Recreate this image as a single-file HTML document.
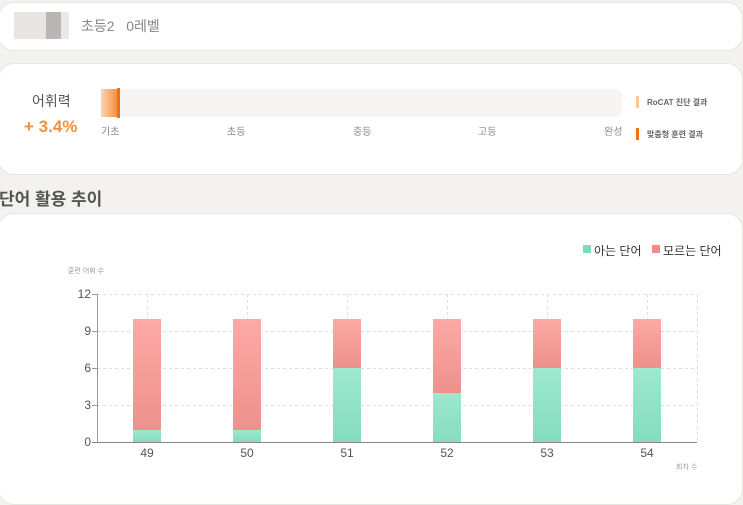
<!DOCTYPE html><html><head><meta charset="utf-8"><style>
body{margin:0;width:743px;height:485px;background:#f3f2f0;font-family:"Liberation Sans","Noto Sans CJK KR",sans-serif;position:relative;overflow:hidden}
.card{position:absolute;background:#fff;border-radius:16px;border:1px solid #e8e6e3}
.a{position:absolute;white-space:nowrap}
</style></head><body>
<div class="card" style="left:-2px;top:2px;width:743px;height:47px"></div>
<div class="a" style="left:14px;top:12px;width:55px;height:27px;background:linear-gradient(90deg,#e6e1de 0 32px,#b3aeac 32px 47px,#e8e6e6 47px);opacity:.9"></div>
<div class="a" style="left:81px;top:16px;font-size:14px;color:#8a8684">초등2 &nbsp; 0레벨</div>
<div class="card" style="left:-2px;top:63px;width:743px;height:110px"></div>
<div class="a" style="left:32px;top:91px;font-size:14px;color:#555">어휘력</div>
<div class="a" style="left:24px;top:117px;font-size:17px;color:#f0923c;font-weight:bold">+ 3.4%</div>
<div class="a" style="left:101px;top:89px;width:521px;height:28px;background:#f6f5f3;border-radius:6px"></div>
<div class="a" style="left:101px;top:89px;width:17px;height:28px;background:linear-gradient(90deg,#fcd7b4,#f58b3a)"></div>
<div class="a" style="left:117px;top:88px;width:3px;height:30px;background:#e8701e"></div>
<div class="a" style="left:101px;top:123px;font-size:10px;color:#888">기초</div>
<div class="a" style="left:227px;top:123px;font-size:10px;color:#888">초등</div>
<div class="a" style="left:353px;top:123px;font-size:10px;color:#888">중등</div>
<div class="a" style="left:478px;top:123px;font-size:10px;color:#888">고등</div>
<div class="a" style="left:604px;top:123px;font-size:10px;color:#888">완성</div>
<div class="a" style="left:636px;top:96px;width:3px;height:12px;background:#f9c897"></div>
<div class="a" style="left:647px;top:97px;font-size:8px;color:#666;font-weight:bold">RoCAT 진단 결과</div>
<div class="a" style="left:636px;top:128px;width:3px;height:12px;background:#ea7518"></div>
<div class="a" style="left:647px;top:129px;font-size:8px;color:#666;font-weight:bold">맞춤형 훈련 결과</div>
<div class="a" style="left:-1px;top:185px;font-size:17px;font-weight:bold;color:#555">단어 활용 추이</div>
<div class="card" style="left:-2px;top:213px;width:743px;height:290px"></div>
<div class="a" style="left:583px;top:245px;width:8px;height:8px;background:#7edbbd"></div>
<div class="a" style="left:594px;top:242px;font-size:12px;color:#333">아는 단어</div>
<div class="a" style="left:652px;top:245px;width:8px;height:8px;background:#ef8d8a"></div>
<div class="a" style="left:663px;top:242px;font-size:12px;color:#333">모르는 단어</div>
<div class="a" style="left:68px;top:266px;font-size:7px;color:#999">훈련 어휘 수</div>
<div class="a" style="left:676px;top:462px;font-size:7px;color:#999">회차 수</div>
<svg class="a" style="left:0;top:0" width="743" height="485">
<defs><linearGradient id="r" x1="0" y1="0" x2="0" y2="1"><stop offset="0" stop-color="#fca9a5"/><stop offset="1" stop-color="#ed918c"/></linearGradient>
<linearGradient id="g" x1="0" y1="0" x2="0" y2="1"><stop offset="0" stop-color="#9ee8cf"/><stop offset="1" stop-color="#85dcbe"/></linearGradient></defs>
<g stroke="#ddd" stroke-dasharray="3,3" stroke-width="1">
<line x1="97" y1="294.5" x2="697" y2="294.5"/><line x1="97" y1="331.5" x2="697" y2="331.5"/><line x1="97" y1="368.5" x2="697" y2="368.5"/><line x1="97" y1="405.5" x2="697" y2="405.5"/>
<line x1="147.5" y1="294" x2="147.5" y2="442"/><line x1="247.5" y1="294" x2="247.5" y2="442"/><line x1="347.5" y1="294" x2="347.5" y2="442"/><line x1="447.5" y1="294" x2="447.5" y2="442"/><line x1="547.5" y1="294" x2="547.5" y2="442"/><line x1="647.5" y1="294" x2="647.5" y2="442"/><line x1="697.5" y1="294" x2="697.5" y2="442"/>
</g>
<g>
<rect x="133" y="319" width="28" height="111" fill="url(#r)"/><rect x="133" y="430" width="28" height="12" fill="url(#g)"/>
<rect x="233" y="319" width="28" height="111" fill="url(#r)"/><rect x="233" y="430" width="28" height="12" fill="url(#g)"/>
<rect x="333" y="319" width="28" height="49" fill="url(#r)"/><rect x="333" y="368" width="28" height="74" fill="url(#g)"/>
<rect x="433" y="319" width="28" height="74" fill="url(#r)"/><rect x="433" y="393" width="28" height="49" fill="url(#g)"/>
<rect x="533" y="319" width="28" height="49" fill="url(#r)"/><rect x="533" y="368" width="28" height="74" fill="url(#g)"/>
<rect x="633" y="319" width="28" height="49" fill="url(#r)"/><rect x="633" y="368" width="28" height="74" fill="url(#g)"/>
</g>
<line x1="97.5" y1="294" x2="97.5" y2="442" stroke="#999"/>
<line x1="92" y1="442.5" x2="697" y2="442.5" stroke="#888"/>
<g stroke="#999"><line x1="92" y1="294.5" x2="97" y2="294.5"/><line x1="92" y1="331.5" x2="97" y2="331.5"/><line x1="92" y1="368.5" x2="97" y2="368.5"/><line x1="92" y1="405.5" x2="97" y2="405.5"/></g>
<g font-family="Liberation Sans,sans-serif" font-size="12" fill="#555" text-anchor="end">
<text x="91" y="298">12</text><text x="91" y="335">9</text><text x="91" y="372">6</text><text x="91" y="409">3</text><text x="91" y="446">0</text></g>
<g font-family="Liberation Sans,sans-serif" font-size="12" fill="#555" text-anchor="middle">
<text x="147" y="457">49</text><text x="247" y="457">50</text><text x="347" y="457">51</text><text x="447" y="457">52</text><text x="547" y="457">53</text><text x="647" y="457">54</text></g>
</svg>
</body></html>
